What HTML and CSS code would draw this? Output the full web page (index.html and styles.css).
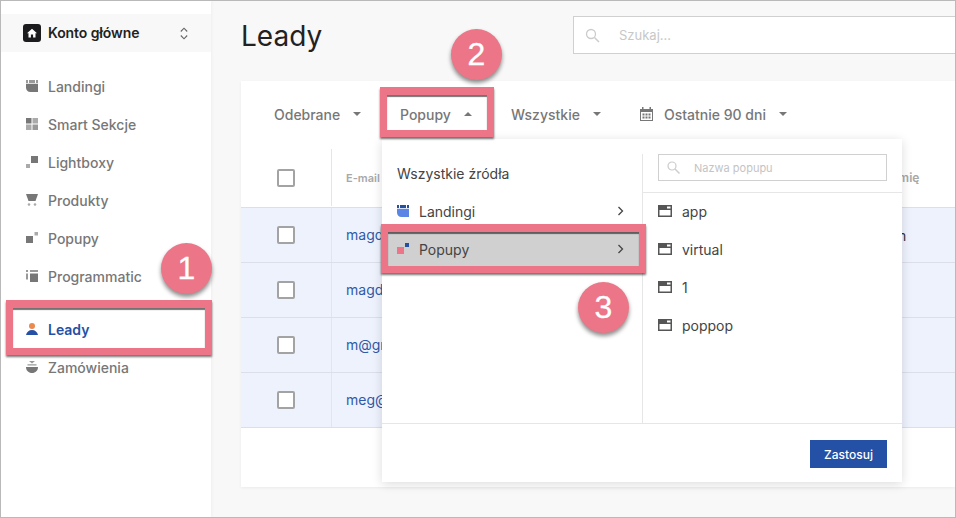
FILE: index.html
```html
<!DOCTYPE html>
<html lang="pl">
<head>
<meta charset="utf-8">
<title>Leady</title>
<link rel="stylesheet" href="styles.css">
</head>
<body>
<div class="frame">
  <aside class="sidebar">
    <div class="account">
      <span class="home"><svg width="10" height="10" viewBox="0 0 10 10"><path fill="#fff" d="M5 .8 0 5.2h1.5V9.500h2.400V6.600h2.200v2.900h2.400V5.200H10z"/></svg></span>
      <span class="account-name">Konto główne</span>
      <svg class="updown" width="8" height="13" viewBox="0 0 8 13"><path fill="none" stroke="#666" stroke-width="1.100" d="M.8 4.500 4 1.200l3.200 3.300M.8 8.500 4 11.800l3.200-3.300"/></svg>
    </div>
    <nav class="nav">
      <a class="nav-item"><svg class="nav-icon" width="12" height="12" viewBox="0 0 12 12"><path fill="#9a9a9a" d="M0 0h2v3H0zM3 0h6v3H3zM10 0h2v3h-2z"/><path fill="#777" d="M0 3.700h12V12H4.500C1.800 12 0 10.200 0 7.500z"/></svg>Landingi</a>
      <a class="nav-item"><svg class="nav-icon" width="12" height="12" viewBox="0 0 12 12"><path fill="#777" d="M0 0h5.500v5.500H0z"/><path fill="#aaa" d="M6.500 0H12v5.500H6.500zM0 6.500h5.500V12H0z"/><path fill="#999" d="M6.500 6.500H12V12H6.500z"/></svg>Smart Sekcje</a>
      <a class="nav-item"><svg class="nav-icon" width="12" height="12" viewBox="0 0 12 12"><path fill="#aaa" d="M0 8h4v4H0z"/><path fill="#777" d="M5 0h7v7H5z"/></svg>Lightboxy</a>
      <a class="nav-item"><svg class="nav-icon" width="12" height="12" viewBox="0 0 12 12"><path fill="#777" d="M0 0h12l-2.500 7h-7z"/><circle cx="3" cy="10.500" r="1.300" fill="#aaa"/><circle cx="9" cy="10.500" r="1.300" fill="#aaa"/></svg>Produkty</a>
      <a class="nav-item"><svg class="nav-icon" width="12" height="12" viewBox="0 0 12 12"><path fill="#777" d="M0 4h7v7H0z"/><path fill="#aaa" d="M8.500 0H12v3.500H8.500z"/></svg>Popupy</a>
      <a class="nav-item"><svg class="nav-icon" width="12" height="12" viewBox="0 0 12 12"><path fill="#999" d="M0 0h2v2H0zM0 3.500h2v6H0zM4 0h8v2H4z"/><path fill="#777" d="M4 3.500h8V12H4z"/></svg>Programmatic</a>
      <a class="nav-item nav-active"><svg class="nav-icon" width="12" height="12" viewBox="0 0 12 12"><circle cx="6" cy="3" r="3" fill="#ea8a4f"/><path fill="#2450a6" d="M0 12c.5-3 3-5 6-5s5.500 2 6 5z"/></svg>Leady</a>
      <a class="nav-item"><svg class="nav-icon" width="12" height="12" viewBox="0 0 12 12"><path fill="#999" d="M3 0h6L6 2.500zM1.500 3.200h9v1.300h-9z"/><path fill="#777" d="M0 6h12c0 3.500-2.500 6-6 6S0 9.500 0 6z"/></svg>Zamówienia</a>
    </nav>
  </aside>
  <main class="main">
    <header class="topbar">
      <h1 class="title">Leady</h1>
      <div class="search">
        <svg width="15" height="15" viewBox="0 0 15 15"><circle cx="6" cy="6" r="4.500" fill="none" stroke="#ccc" stroke-width="1.300"/><path stroke="#ccc" stroke-width="1.500" d="m9.500 9.500 4.500 4.500"/></svg>
        <span>Szukaj...</span>
      </div>
    </header>
    <section class="card">
      <div class="filters">
        <span class="filter filter-a">Odebrane<i class="caret"></i></span>
        <span class="filter filter-b">Popupy<i class="caret caret-up"></i></span>
        <span class="filter filter-c">Wszystkie<i class="caret"></i></span>
        <span class="filter">
          <svg class="cal" width="13" height="14" viewBox="0 0 13 14"><path fill="#777" d="M2 0h1.500v2h6V0H11v2h2v12H0V2h2zM1 5v8h11V5z"/><path fill="#777" d="M2.500 6.500h2v2h-2zM5.500 6.500h2v2h-2zM8.500 6.500h2v2h-2zM2.500 9.500h2v2h-2zM5.500 9.500h2v2h-2zM8.500 9.500h2v2h-2z"/></svg>Ostatnie 90 dni<i class="caret"></i>
        </span>
      </div>
      <div class="table">
        <div class="row row-head">
          <div class="cell-check"><span class="checkbox"></span></div>
          <div class="cell-mail">E-mail</div>
          <div class="cell-name">Imię</div>
        </div>
        <div class="row">
          <div class="cell-check"><span class="checkbox"></span></div>
          <div class="cell-mail">magda@gmail.com</div>
          <div class="cell-name">m</div>
        </div>
        <div class="row">
          <div class="cell-check"><span class="checkbox"></span></div>
          <div class="cell-mail">magda2@gmail.com</div>
          <div class="cell-name"></div>
        </div>
        <div class="row">
          <div class="cell-check"><span class="checkbox"></span></div>
          <div class="cell-mail">m@gmail.com</div>
          <div class="cell-name"></div>
        </div>
        <div class="row">
          <div class="cell-check"><span class="checkbox"></span></div>
          <div class="cell-mail">meg@gmail.com</div>
          <div class="cell-name"></div>
        </div>
      </div>
      <div class="dropdown">
        <div class="dropdown-body">
          <div class="sources">
            <div class="source">Wszystkie źródła</div>
            <div class="source">
              <svg class="source-icon" width="12" height="12" viewBox="0 0 12 12"><path fill="#24509f" d="M0 0h2v3H0zM3 0h6v3H3zM10 0h2v3h-2z"/><path fill="#5b86e5" d="M0 3.700h12V12H4.500C1.800 12 0 10.200 0 7.500z"/></svg>
              <span class="source-name">Landingi</span>
              <svg width="7" height="10" viewBox="0 0 7 10"><path fill="none" stroke="#444" stroke-width="1.300" d="m1.500 1 4 4-4 4"/></svg>
            </div>
            <div class="source source-on">
              <svg class="source-icon" width="12" height="12" viewBox="0 0 12 12"><path fill="#ec7588" d="M0 4h7v7H0z"/><path fill="#24509f" d="M8 0h4v4H8z"/></svg>
              <span class="source-name">Popupy</span>
              <svg width="7" height="10" viewBox="0 0 7 10"><path fill="none" stroke="#444" stroke-width="1.300" d="m1.500 1 4 4-4 4"/></svg>
            </div>
          </div>
          <div class="popups">
            <div class="popups-head">
              <div class="popup-search">
                <svg width="13" height="13" viewBox="0 0 13 13"><circle cx="5" cy="5" r="4" fill="none" stroke="#ccc" stroke-width="1.200"/><path stroke="#ccc" stroke-width="1.400" d="m8 8 4.500 4.500"/></svg>
                <span>Nazwa popupu</span>
              </div>
            </div>
            <div class="popup"><svg width="14" height="12" viewBox="0 0 14 12"><path fill="#555" fill-rule="evenodd" d="M0 0h14v12H0zM1.500 5v5.500h11V5zM9 1.500V3.500h3.500v-2z"/></svg>app</div>
            <div class="popup"><svg width="14" height="12" viewBox="0 0 14 12"><path fill="#555" fill-rule="evenodd" d="M0 0h14v12H0zM1.500 5v5.500h11V5zM9 1.500V3.500h3.500v-2z"/></svg>virtual</div>
            <div class="popup"><svg width="14" height="12" viewBox="0 0 14 12"><path fill="#555" fill-rule="evenodd" d="M0 0h14v12H0zM1.500 5v5.500h11V5zM9 1.500V3.500h3.500v-2z"/></svg>1</div>
            <div class="popup"><svg width="14" height="12" viewBox="0 0 14 12"><path fill="#555" fill-rule="evenodd" d="M0 0h14v12H0zM1.500 5v5.500h11V5zM9 1.500V3.500h3.500v-2z"/></svg>poppop</div>
          </div>
        </div>
        <div class="dropdown-foot"><button class="apply">Zastosuj</button></div>
      </div>
    </section>
  </main>
  <div class="marks">
    <div class="mark mark-1"></div>
    <div class="mark mark-2"></div>
    <div class="mark mark-3"></div>
    <div class="badge badge-1">1</div>
    <div class="badge badge-2">2</div>
    <div class="badge badge-3">3</div>
  </div>
</div>
</body>
</html>
```
FILE: styles.css
```css
* { box-sizing: border-box; }
html, body { margin: 0; padding: 0; }
body { font-family: Inter, "Liberation Sans", sans-serif; background: #f8f8f8; overflow: hidden; }

.frame {
  position: relative;
  display: flex;
  width: 956px;
  height: 518px;
  border: 1px solid #b9b9b9;
  overflow: hidden;
  background: #f8f8f8;
}

/* sidebar */
.sidebar {
  width: 210px;
  flex: none;
  background: #fff;
  padding-top: 13px;
  box-shadow: 1px 0 3px rgba(0, 0, 0, .04);
}
.account {
  display: flex;
  align-items: center;
  height: 38px;
  padding: 0 22px;
  background: #f8f8f8;
}
.home {
  display: flex;
  align-items: center;
  justify-content: center;
  width: 18px;
  height: 18px;
  border-radius: 3px;
  background: #1c1c1e;
  margin-right: 7px;
}
.account-name { flex: 1; padding-bottom: 2px; font-size: 14px; font-weight: 600; color: #222; letter-spacing: -.1px; }
.updown { margin-right: 1px; }
.nav { display: flex; flex-direction: column; padding-top: 15px; }
.nav-item {
  display: flex;
  align-items: center;
  height: 38px;
  padding-left: 25px;
  font-size: 14px;
  font-weight: 500;
  color: #777;
}
.nav-icon { margin-right: 10px; flex: none; }
.nav-active { margin-top: 15px; color: #2450a6; font-weight: 600; }

/* main */
.main { flex: 1; min-width: 0; padding-left: 30px; }
.topbar { display: flex; height: 80px; padding-top: 15px; }
.title {
  margin: 0;
  width: 332px;
  font-size: 28px;
  line-height: 40px;
  font-weight: 400;
  color: #222;
}
.search {
  display: flex;
  align-items: center;
  flex: 1;
  height: 38px;
  margin-right: -2px;
  padding-left: 11px;
  background: #fff;
  border: 1px solid #d0d0d0;
  font-size: 13px;
  color: #c8c8c8;
}
.search svg { margin-right: 19px; }

.card {
  position: relative;
  height: 406px;
  background: #fff;
  box-shadow: 0 1px 3px rgba(0, 0, 0, .06);
}
.filters {
  display: flex;
  align-items: center;
  height: 68px;
  padding: 0 0 2px 33px;
  font-size: 14px;
  font-weight: 500;
  color: #777;
}
.filter { display: flex; align-items: center; }
.filter-a { width: 104px; margin-right: 22px; }
.filter-b { width: 111px; }
.filter-c { width: 129px; }
.caret {
  display: block;
  width: 0;
  height: 0;
  margin-left: 13px;
  border-left: 4px solid transparent;
  border-right: 4px solid transparent;
  border-top: 4px solid #777;
}
.caret-up { border-top: 0; border-bottom: 4px solid #777; }
.cal { margin-right: 11px; }

.table { font-size: 14px; }
.row { display: flex; height: 55px; background: #eef2fc; border-bottom: 1px solid #dcdfea; }
.row-head { height: 59px; padding-bottom: 1px; background: #fff; }
.cell-check {
  display: flex;
  align-items: center;
  justify-content: center;
  width: 91px;
  border-right: 1px solid #e2e4ee;
  padding-right: 1px;
}
.checkbox {
  width: 18px;
  height: 18px;
  background: #fff;
  border: 2px solid #a3a3a3;
  border-radius: 2px;
}
.cell-mail {
  width: 50px;
  margin-right: 512px;
  padding-left: 14px;
  overflow: hidden;
  white-space: nowrap;
  line-height: 54px;
  color: #2f5aa8;
}
.cell-name { display: flex; align-items: center; color: #333; }
.row-head .cell-mail { font-size: 11px; font-weight: 600; color: #a8a8a8; line-height: 58px; }
.row-head .cell-name { font-size: 12px; font-weight: 600; color: #a8a8a8; padding-left: 1px; }

.dropdown {
  position: absolute;
  left: 141px;
  top: 58px;
  width: 520px;
  height: 343px;
  background: #fff;
  box-shadow: 0 2px 10px rgba(0, 0, 0, .14);
  font-size: 14px;
  color: #444;
}
.dropdown-body { display: flex; height: 285px; border-bottom: 1px solid #e6e6e6; }
.sources { width: 260px; padding-top: 16px; }
.source { display: flex; align-items: center; height: 38px; padding: 0 18px 2px 15px; }
.source-icon { margin-right: 10px; }
.source-name { flex: 1; }
.source-on { background: #d0d0d0; }
.popups { flex: 1; margin-top: 15px; border-left: 1px solid #e6e6e6; }
.popups-head { height: 39px; padding: 0 15px; border-bottom: 1px solid #e6e6e6; }
.popup-search {
  display: flex;
  align-items: center;
  height: 27px;
  padding-left: 8px;
  border: 1px solid #d0d0d0;
  font-size: 11px;
  color: #c4c4c4;
}
.popup-search svg { margin-right: 14px; }
.popup { display: flex; align-items: center; height: 38px; padding: 0 0 2px 15px; }
.popup svg { margin-right: 10px; }
.dropdown-foot { display: flex; justify-content: flex-end; padding: 16px 15px 0 0; }
.apply {
  width: 77px;
  height: 28px;
  padding: 0;
  border: 0;
  background: #2450a6;
  color: #fff;
  font-family: inherit;
  font-size: 12px;
  font-weight: 500;
}

/* annotations */
.marks { position: absolute; inset: -1px; pointer-events: none; }
.mark {
  position: absolute;
  border: 7px solid #ec7588;
  border-top-width: 8px;
  box-shadow: 0 2px 2px rgba(0, 0, 0, .55), inset 0 2px 1px rgba(0, 0, 0, .55);
}
.mark-1 { left: 6px; top: 300px; width: 206px; height: 55px; }
.mark-2 { left: 380px; top: 87px; width: 114px; height: 50px; }
.mark-3 { left: 381px; top: 224px; width: 265px; height: 49px; }
.badge {
  position: absolute;
  width: 51px;
  height: 51px;
  border-radius: 50%;
  background: #ec7588;
  box-shadow: 0 3px 4px rgba(0, 0, 0, .45);
  color: #fff;
  font-family: "Liberation Sans", sans-serif;
  font-size: 32px;
  line-height: 51px;
  text-align: center;
  -webkit-text-stroke: .3px #fff;
}
.badge-1 { left: 161px; top: 243px; }
.badge-2 { left: 451px; top: 29px; }
.badge-3 { left: 578px; top: 282px; }
```
